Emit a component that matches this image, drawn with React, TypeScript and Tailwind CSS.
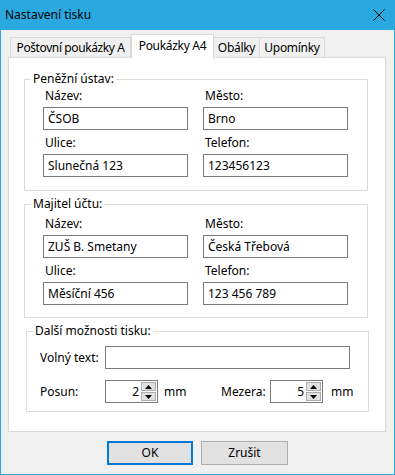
import React from 'react';

const font = { fontFamily: '"Segoe UI", "Noto Sans", sans-serif' };

function Group({ title, className, children }: { title: string; className: string; children: React.ReactNode }) {
  return (
    <div className={`relative border border-[#dcdcdc] ${className}`}>
      <span className="absolute -top-[9px] left-[6px] bg-white px-[2px] leading-[16px]">{title}</span>
      {children}
    </div>
  );
}

function Field({ label, value }: { label: string; value: string }) {
  return (
    <div className="flex w-[145px] flex-col">
      <div className="ml-[2px] h-[16px] leading-[16px]">{label}</div>
      <div className="mt-[3px] flex h-[23px] items-center border border-[#7a7a7a] bg-white px-[4px] leading-none">
        {value}
      </div>
    </div>
  );
}

function Spinner({ value }: { value: string }) {
  return (
    <div className="flex h-[23px] w-[53px] items-center border border-[#7a7a7a] bg-white">
      <div className="flex-1 pr-[2px] text-right leading-none">{value}</div>
      <div className="mr-[1px] flex flex-col gap-[1px]">
        <div className="flex h-[9px] w-[15px] items-center justify-center border border-[#adadad] bg-[#e1e1e1]">
          <svg width="7" height="4" viewBox="0 0 7 4"><path d="M3.5 0L7 4H0Z" fill="#000" /></svg>
        </div>
        <div className="flex h-[9px] w-[15px] items-center justify-center border border-[#adadad] bg-[#e1e1e1]">
          <svg width="7" height="4" viewBox="0 0 7 4"><path d="M0 0H7L3.5 4Z" fill="#000" /></svg>
        </div>
      </div>
    </div>
  );
}

export default function App() {
  return (
    <div style={font} className="flex h-[475px] w-[395px] flex-col border-x border-b border-[#2aa9e0] bg-[#f0f0f0] text-[12px] text-black">
      {/* Title bar */}
      <div className="-mx-px flex h-[30px] shrink-0 items-center justify-between bg-[#2aa9e0] pl-[5px] pr-[10px]">
        <span className="text-[12px]">Nastavení tisku</span>
        <svg width="12" height="12" viewBox="0 0 12 12">
          <path d="M0.5 0.5L11.5 11.5M11.5 0.5L0.5 11.5" stroke="#000" strokeWidth="1" />
        </svg>
      </div>

      {/* Tabs */}
      <div className="ml-[9px] mt-[4px] flex h-[23px] items-end whitespace-nowrap">
        <div className="flex h-[20px] w-[121px] items-center justify-center border border-b-0 border-[#d9d9d9] bg-[#f0f0f0] tracking-[-0.4px]">Poštovní poukázky A</div>
        <div className="-mb-px z-10 flex h-[24px] w-[83px] items-center justify-center border border-b-0 border-[#d9d9d9] bg-white pb-[2px] tracking-[-0.3px]">Poukázky A4</div>
        <div className="flex h-[20px] w-[46px] items-center justify-center border border-b-0 border-l-0 border-[#d9d9d9] bg-[#f0f0f0] tracking-[-0.3px]">Obálky</div>
        <div className="flex h-[20px] w-[65px] items-center justify-center border border-b-0 border-l-0 border-[#d9d9d9] bg-[#f0f0f0] tracking-[-0.3px]">Upomínky</div>
      </div>

      {/* Tab panel */}
      <div className="ml-[7px] flex h-[375px] w-[378px] flex-col border border-[#d9d9d9] bg-white">
        <Group title="Peněžní ústav:" className="ml-[15px] mt-[21px] h-[112px] w-[344px]">
          <div className="ml-[18px] mt-[8px] flex flex-col gap-[5px]">
            <div className="flex gap-[15px]">
              <Field label="Název:" value="ČSOB" />
              <Field label="Město:" value="Brno" />
            </div>
            <div className="flex gap-[15px]">
              <Field label="Ulice:" value="Slunečná 123" />
              <Field label="Telefon:" value="123456123" />
            </div>
          </div>
        </Group>

        <Group title="Majitel účtu:" className="ml-[15px] mt-[13px] h-[114px] w-[344px]">
          <div className="ml-[18px] mt-[11px] flex flex-col gap-[5px]">
            <div className="flex gap-[15px]">
              <Field label="Název:" value="ZUŠ B. Smetany" />
              <Field label="Město:" value="Česká Třebová" />
            </div>
            <div className="flex gap-[15px]">
              <Field label="Ulice:" value="Měsíční 456" />
              <Field label="Telefon:" value="123 456 789" />
            </div>
          </div>
        </Group>

        <Group title="Další možnosti tisku:" className="ml-[17px] mt-[13px] h-[81px] w-[343px]">
          <div className="mt-[14px] flex items-center">
            <span className="ml-[13px] w-[65px]">Volný text:</span>
            <div className="h-[23px] w-[245px] border border-[#7a7a7a] bg-white" />
          </div>
          <div className="mt-[11px] flex items-center">
            <span className="ml-[13px] w-[65px]">Posun:</span>
            <Spinner value="2" />
            <span className="ml-[6px] w-[57px]">mm</span>
            <span className="w-[49px]">Mezera:</span>
            <Spinner value="5" />
            <span className="ml-[8px]">mm</span>
          </div>
        </Group>
      </div>

      {/* Buttons */}
      <div className="ml-[106px] mt-[9px] flex gap-[8px]">
        <button className="flex h-[24px] w-[86px] items-center justify-center border-2 border-[#0078d7] bg-[#e1e1e1]">OK</button>
        <button className="flex h-[24px] w-[87px] items-center justify-center border border-[#adadad] bg-[#e1e1e1]">Zrušit</button>
      </div>
    </div>
  );
}
